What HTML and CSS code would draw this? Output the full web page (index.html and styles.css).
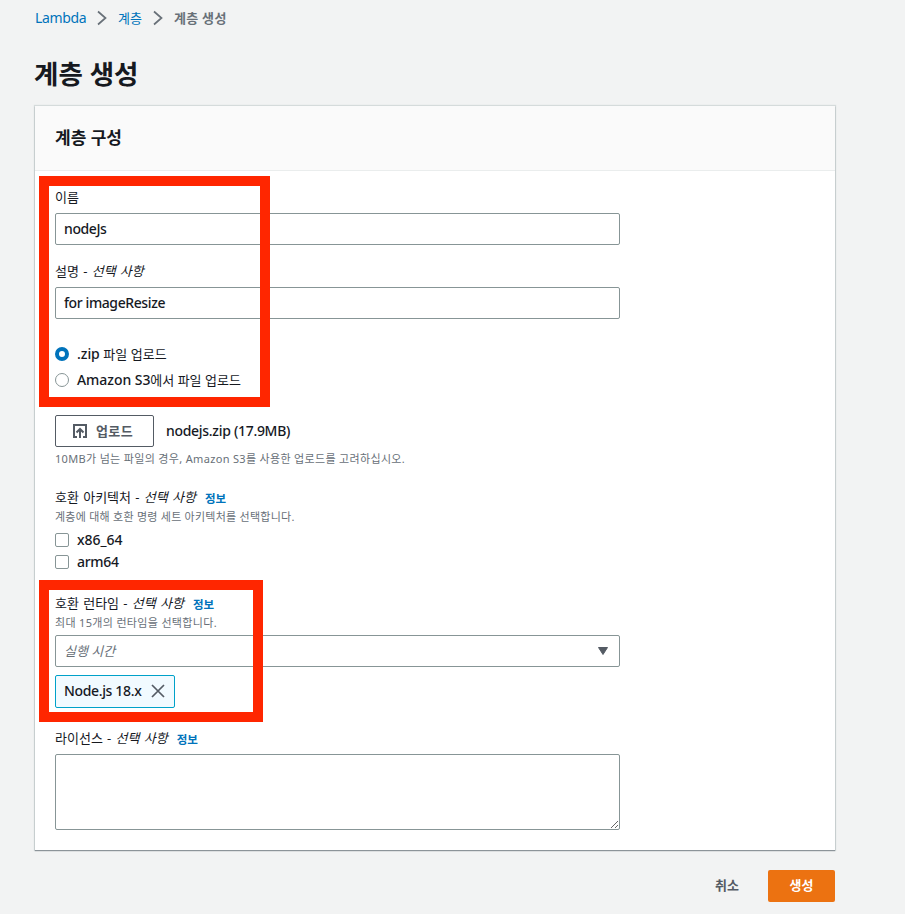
FILE: index.html
```html
<!DOCTYPE html>
<html lang="ko">
<head>
<meta charset="utf-8">
<title>계층 생성</title>
<link rel="stylesheet" href="styles.css">
</head>
<body>
<main class="page">
  <nav class="crumbs">
    <a class="root">Lambda</a>
    <svg class="chev" viewBox="0 0 10 16"><path d="M1 1.500 8.500 8 1 14.500"/></svg>
    <a>계층</a>
    <svg class="chev" viewBox="0 0 10 16"><path d="M1 1.500 8.500 8 1 14.500"/></svg>
    <b>계층 생성</b>
  </nav>
  <h1>계층 생성</h1>
  <section class="card">
    <header class="card-head"><h2>계층 구성</h2></header>
    <div class="card-body">
      <div class="label label-name">이름</div>
      <div class="field">nodeJs</div>
      <div class="label label-desc">설명 - <i>선택 사항</i></div>
      <div class="field">for imageResize</div>
      <div class="radios">
        <div class="option"><span class="radio on"></span><span class="latin wide">.zip</span>&nbsp;<span class="ko">파일 업로드</span></div>
        <div class="option"><span class="radio"></span><span class="latin wide">Amazon S3</span>에서 파일 업로드</div>
      </div>
      <div class="upload">
        <div class="upload-btn">
          <svg viewBox="0 0 16 16"><path d="M5 14H2V2h12v12h-3M8 15V6.500M4.500 9.500 8 6l3.500 3.500"/></svg>
          <span>업로드</span>
        </div>
        <span class="latin">nodejs.zip (17.9MB)</span>
      </div>
      <div class="hint upload-hint">10MB가 넘는 파일의 경우, Amazon S3를 사용한 업로드를 고려하십시오.</div>
      <div class="label label-arch">호환 아키텍처 - <i>선택 사항</i><a class="info">정보</a></div>
      <div class="hint hint-arch">계층에 대해 호환 명령 세트 아키텍처를 선택합니다.</div>
      <div class="checks">
        <div class="check"><span class="box"></span><span class="latin wide">x86_64</span></div>
        <div class="check"><span class="box"></span><span class="latin">arm64</span></div>
      </div>
      <div class="label label-runtime">호환 런타임 - <i>선택 사항</i><a class="info">정보</a></div>
      <div class="hint">최대 15개의 런타임을 선택합니다.</div>
      <div class="field select"><i>실행 시간</i><svg viewBox="0 0 12 10"><path d="M1.500 1.500h9L6 8.500z"/></svg></div>
      <div class="token"><span>Node.js 18.x</span><svg viewBox="0 0 14 14"><path d="m1 1 12 12M13 1 1 13"/></svg></div>
      <div class="label label-license">라이선스 - <i>선택 사항</i><a class="info">정보</a></div>
      <textarea class="area"></textarea>
    </div>
    <div class="mark mark-top"></div>
    <div class="mark mark-runtime"></div>
  </section>
  <footer class="actions"><span class="cancel">취소</span><span class="create">생성</span></footer>
</main>
</body>
</html>
```
FILE: styles.css
```css
* { box-sizing: border-box; }
body {
  margin: 0;
  height: 914px;
  overflow: hidden;
  background: #f2f3f3;
  color: #16191f;
  font: 13px/22px "Noto Sans", "Noto Sans CJK KR", sans-serif;
}
svg { display: block; fill: none; stroke: #545b64; stroke-width: 2; flex: none; }
.page { width: 800px; margin-left: 35px; }
.latin { font-size: 14px; font-weight: 500; letter-spacing: -.3px; }
.wide { letter-spacing: -.05px; }
.ko { letter-spacing: .1px; }
.crumbs { display: flex; align-items: center; height: 36px; color: #687078; }
.crumbs a { color: #0073bb; }
.crumbs .root { width: 51px; font-size: 14px; letter-spacing: -.35px; }
.crumbs b { letter-spacing: .3px; }
.chev { width: 10px; height: 16px; margin: 0 11px; stroke: #687078; stroke-width: 1.7; }
h1 { margin: 20px 0 13px -1px; font-size: 26.500px; line-height: 37px; font-weight: 700; }
.card {
  position: relative;
  height: 744px;
  background: #fff;
  box-shadow: 0 1px 1px #687078aa, 0 0 1px 1px #d5dbdb;
}
.card-head { height: 65px; padding: 0 20px; background: #fafafa; border-bottom: 1px solid #eaeded; }
h2 { margin: 0; font-size: 17px; line-height: 63px; font-weight: 700; }
.card-body { padding: 15px 20px 20px; }
.label { height: 22px; white-space: nowrap; word-spacing: .9px; }
.label-name { margin-bottom: 5px; }
.label-desc { margin: 15px 0 5px; }
.field {
  display: flex;
  align-items: center;
  width: 565px;
  height: 32px;
  padding: 0 8px;
  border: 1px solid #879596;
  border-radius: 2px;
  background: #fff;
  font-size: 14px;
  font-weight: 500;
  letter-spacing: -.4px;
}
.radios { margin: 22px 0; }
.option { display: flex; align-items: center; height: 26px; }
.check { display: flex; align-items: center; height: 22px; }
.radio, .box { flex: none; width: 14px; height: 14px; margin-right: 8px; border: 1px solid #879596; background: #fff; }
.radio { border-radius: 50%; }
.on { border: 4px solid #0073bb; }
.box { border-radius: 2px; }
.upload { display: flex; align-items: center; gap: 12px; height: 32px; }
.upload-btn {
  display: flex;
  align-items: center;
  width: 99px;
  height: 32px;
  padding-left: 16px;
  gap: 8px;
  border: 1px solid #545b64;
  border-radius: 2px;
  color: #545b64;
  font-weight: 700;
}
.upload-btn span { letter-spacing: .4px; }
.upload-btn svg { width: 16px; height: 16px; }
.hint { height: 16px; color: #687078; font-size: 11px; line-height: 16px; letter-spacing: .33px; white-space: nowrap; }
.hint-arch { letter-spacing: .25px; }
.upload-hint { margin-top: 4px; }
.label-arch { margin: 19px 0 1px; }
.info { position: relative; top: 1px; margin-left: 9px; color: #0073bb; font-size: 11.500px; font-weight: 700; }
.checks { margin-top: 4px; }
.label-runtime { margin: 19px 0 1px; }
.select { justify-content: space-between; margin-top: 4px; color: #687078; font-size: 13px; font-weight: 400; letter-spacing: 0; padding-right: 10px; }
.select svg { width: 12px; height: 10px; fill: #545b64; stroke-width: 1; stroke-linejoin: round; }
.token {
  display: flex;
  align-items: center;
  justify-content: space-between;
  width: 120px;
  height: 33px;
  margin-top: 8px;
  padding: 0 9px 0 8px;
  border: 1px solid #00a1c9;
  border-radius: 2px;
  background: #f1faff;
  font-size: 14px;
  font-weight: 500;
  line-height: 21px;
  letter-spacing: -.35px;
}
.token span { margin-bottom: 2px; }
.token svg { width: 14px; height: 14px; margin-bottom: 1px; stroke-width: 1.700; }
.label-license { margin: 19px 0 5px; }
.area {
  display: block;
  width: 565px;
  height: 76px;
  border: 1px solid #879596;
  border-radius: 2px;
  background: #fff;
  resize: both;
}
.mark { position: absolute; left: 4px; border: 10px solid #ff2600; }
.mark-top { top: 70px; width: 231px; height: 231px; }
.mark-runtime { top: 474px; width: 224px; height: 142px; }
.actions { display: flex; justify-content: flex-end; align-items: center; gap: 29px; height: 32px; margin-top: 20px; font-weight: 700; }
.cancel { margin-bottom: 2px; color: #545b64; }
.create { width: 67px; height: 32px; border-radius: 2px; background: #ec7211; color: #fff; line-height: 31px; text-align: center; }
```
